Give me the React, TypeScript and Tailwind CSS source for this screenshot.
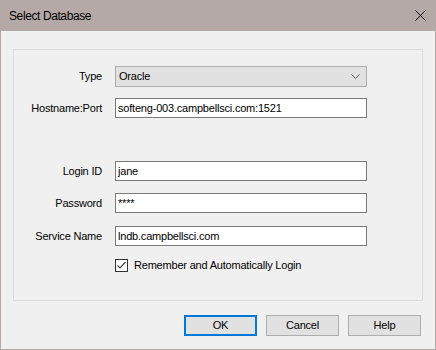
// Select Database dialog
const labelCls =
  "w-[88px] shrink-0 text-right text-[11px] tracking-[-0.2px] text-black leading-none";
const inputCls =
  "ml-[13px] w-[252px] h-[20px] bg-white border border-[#7a7a7a] flex items-center px-[2px] text-[11px] tracking-[-0.2px] text-black leading-none";

type FieldProps = { label: string; value: string; className?: string };

const Field = ({ label, value, className }: FieldProps) => (
  <div className={"flex items-center " + (className ?? "")}>
    <span className={labelCls}>{label}</span>
    <div className={inputCls}>{value}</div>
  </div>
);

export default function App() {
  return (
    <div
      className="w-[436px] h-[350px] flex flex-col bg-[#b5a9a7] select-none"
      style={{ fontFamily: '"Liberation Sans", Arial, sans-serif' }}
    >
      {/* Title bar */}
      <div className="h-[31px] shrink-0 flex items-center justify-between pl-[9px] pr-[10px]">
        <span className="text-[12px] tracking-[-0.4px] text-black">Select Database</span>
        <svg width="11" height="11" viewBox="0 0 11 11" className="mr-[0px]">
          <path d="M0.5 0.5 L10.5 10.5 M10.5 0.5 L0.5 10.5" stroke="#111" strokeWidth="1" />
        </svg>
      </div>

      {/* Body */}
      <div className="flex-1 mx-[1px] mb-[1px] bg-[#f0f0f0] flex flex-col px-[12px] pt-[18px]">
        {/* Group box */}
        <div className="h-[252px] border border-[#dcdcdc] flex flex-col pt-[16px]">
          <div className="flex items-center">
            <span className={labelCls}>Type</span>
            <div className="ml-[13px] w-[252px] h-[21px] bg-[#e1e1e1] border border-[#adadad] flex items-center justify-between pl-[3px] pr-[6px] text-[11px] tracking-[-0.2px] text-black leading-none">
              <span>Oracle</span>
              <svg width="9" height="5" viewBox="0 0 9 5">
                <path d="M0.5 0.5 L4.5 4.5 L8.5 0.5" stroke="#555" strokeWidth="1" fill="none" />
              </svg>
            </div>
          </div>
          <Field label="Hostname:Port" value="softeng-003.campbellsci.com:1521" className="mt-[11px]" />
          <Field label="Login ID" value="jane" className="mt-[43px]" />
          <Field label="Password" value="****" className="mt-[12px]" />
          <Field label="Service Name" value="lndb.campbellsci.com" className="mt-[13px]" />
          <div className="flex items-center mt-[13px] ml-[101px]">
            <div className="w-[13px] h-[13px] border border-[#333333] bg-white flex items-center justify-center">
              <svg width="11" height="11" viewBox="0 0 11 11">
                <path d="M1.5 5.5 L4 8 L9.5 2" stroke="#444" strokeWidth="1.2" fill="none" />
              </svg>
            </div>
            <span className="ml-[6px] text-[11px] tracking-[-0.2px] text-black leading-none">
              Remember and Automatically Login
            </span>
          </div>
        </div>

        {/* Buttons */}
        <div className="flex justify-end gap-[9px] mt-[14px] pr-[2px]">
          <button className="w-[73px] h-[21px] bg-[#e1e1e1] border-2 border-[#0078d7] text-[11px] tracking-[-0.2px] text-black leading-none">
            OK
          </button>
          <button className="w-[73px] h-[21px] bg-[#e1e1e1] border border-[#adadad] text-[11px] tracking-[-0.2px] text-black leading-none">
            Cancel
          </button>
          <button className="w-[73px] h-[21px] bg-[#e1e1e1] border border-[#adadad] text-[11px] tracking-[-0.2px] text-black leading-none">
            Help
          </button>
        </div>
      </div>
    </div>
  );
}
